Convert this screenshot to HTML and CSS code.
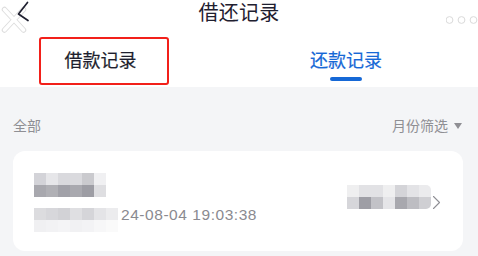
FILE: index.html
```html
<!DOCTYPE html>
<html lang="zh-CN">
<head>
<meta charset="utf-8">
<title>借还记录</title>
<link rel="stylesheet" href="styles.css">
</head>
<body>
<div class="page">
  <header class="nav">
    <div class="nav-left">
      <svg class="nav-icon" width="32" height="36" viewBox="0 0 32 36">
        <g stroke-linecap="round">
          <path d="M4.5 9.5 L23.5 30 M23.5 9.5 L4.5 30" stroke="#dedede" stroke-width="5.5" fill="none"/>
          <path d="M4.5 9.5 L23.5 30 M23.5 9.5 L4.5 30" stroke="#ffffff" stroke-width="3.5" fill="none"/>
        </g>
        <path d="M27.5 2.5 L18.5 14 L28 20.5" stroke="#1f2030" stroke-width="1.7" fill="none" stroke-linecap="round" stroke-linejoin="round"/>
      </svg>
    </div>
    <h1 class="title">借还记录</h1>
    <div class="nav-right">
      <svg class="dots" width="32" height="12" viewBox="0 0 32 12">
        <circle cx="3.5" cy="6" r="3.4" fill="#fff" stroke="#dadada" stroke-width="1"/>
        <circle cx="15.5" cy="6" r="3.4" fill="#fff" stroke="#dadada" stroke-width="1"/>
        <circle cx="27.5" cy="6" r="3.4" fill="#fff" stroke="#dadada" stroke-width="1"/>
      </svg>
    </div>
  </header>

  <nav class="tabs">
    <div class="tab tab-marked">借款记录</div>
    <div class="tab tab-current">
      <span class="tab-label">还款记录</span>
      <i class="tab-bar"></i>
    </div>
  </nav>

  <main class="content">
    <div class="filter">
      <span class="filter-all">全部</span>
      <span class="filter-month">月份筛选<i class="caret"></i></span>
    </div>

    <div class="card">
      <div class="card-left">
        <div class="mosaic mosaic-name"></div>
        <div class="time-row">
          <div class="mosaic mosaic-label"></div>
          <span class="time">24-08-04 19:03:38</span>
        </div>
      </div>
      <div class="card-right">
        <div class="mosaic mosaic-amount"></div>
        <svg class="chevron" width="9" height="15" viewBox="0 0 9 15">
          <path d="M1.5 1.5 L7.5 7.5 L1.5 13.5" stroke="#8f8f95" stroke-width="1.1" fill="none" stroke-linecap="round" stroke-linejoin="round"/>
        </svg>
      </div>
    </div>
  </main>
</div>
</body>
</html>
```

FILE: styles.css
```css
* {
  box-sizing: border-box;
  margin: 0;
  padding: 0;
}

html, body {
  width: 478px;
  height: 256px;
  overflow: hidden;
  background: #ffffff;
}

body {
  font-family: "Noto Sans CJK SC", "Noto Sans", sans-serif;
}

.page {
  width: 478px;
  height: 256px;
  display: flex;
  flex-direction: column;
  background: #f4f5f7;
}

/* ---------- nav bar ---------- */
.nav {
  height: 37px;
  display: grid;
  grid-template-columns: 1fr auto 1fr;
  align-items: start;
  background: #ffffff;
}

.nav-left {
  justify-self: start;
}

.nav-icon {
  display: block;
}

.title {
  margin-top: 1px;
  font-size: 20px;
  line-height: 22px;
  font-weight: 400;
  color: #1f2030;
  letter-spacing: 0.3px;
}

.nav-right {
  justify-self: end;
  padding-top: 14px;
}

.dots {
  display: block;
}

/* ---------- tabs ---------- */
.tabs {
  height: 50px;
  display: flex;
  align-items: flex-start;
  background: #ffffff;
}

.tab {
  font-size: 18px;
  line-height: 22px;
  font-weight: 400;
  -webkit-text-stroke: 0.2px currentColor;
}

.tab-marked {
  margin-left: 39px;
  width: 130px;
  height: 48px;
  border: 2.5px solid #f2201a;
  border-radius: 3px;
  padding: 8.5px 0 0 23.5px;
  color: #1e1f2e;
}

.tab-current {
  margin-left: 141px;
  padding-top: 11px;
  display: flex;
  flex-direction: column;
  align-items: center;
  color: #1668d6;
}

.tab-label {
  display: block;
}

.tab-bar {
  display: block;
  width: 32px;
  height: 3.5px;
  margin-top: 7px;
  border-radius: 2px;
  background: #1668d6;
}

/* ---------- content ---------- */
.content {
  flex: 1;
  background: #f4f5f7;
}

.filter {
  display: flex;
  justify-content: space-between;
  align-items: center;
  padding: 28px 16px 0 13px;
  font-size: 14px;
  line-height: 20px;
  color: #8f8f94;
}

.filter-month {
  display: flex;
  align-items: center;
}

.caret {
  display: block;
  width: 0;
  height: 0;
  margin-left: 6px;
  margin-top: 1px;
  border-left: 4.5px solid transparent;
  border-right: 4.5px solid transparent;
  border-top: 6px solid #8f8f94;
}

.card {
  margin: 16px 15px 0 13px;
  height: 100px;
  border-radius: 12px;
  background: #ffffff;
  display: flex;
  padding: 22px 0 0 21px;
}

.card-left {
  display: flex;
  flex-direction: column;
}

.mosaic {
  height: 24px;
  background-repeat: no-repeat;
  background-size: 100% 12px;
}

.mosaic-name {
  width: 72px;
  background-image:
    linear-gradient(to right, #d3d3d8 0 12px, #e6e6e9 12px 24px, #d9d9dd 24px 36px, #dadade 36px 48px, #cacace 48px 60px, #f0f0f2 60px 72px),
    linear-gradient(to right, #a8a8ae 0 12px, #b0b0b5 12px 24px, #a1a1a8 24px 36px, #a9a9af 36px 48px, #9d9da4 48px 60px, #dedee1 60px 72px);
  background-position: 0 0, 0 12px;
}

.time-row {
  display: flex;
  align-items: flex-start;
  margin-top: 11px;
}

.mosaic-label {
  width: 84px;
  background-image:
    linear-gradient(to right, #dcdcdf 0 12px, #d7d7db 12px 24px, #d2d2d6 24px 36px, #dfdfe2 36px 48px, #d5d5d9 48px 60px, #e4e4e7 60px 72px, #ececee 72px 84px),
    linear-gradient(to right, #f0f0f2 0 12px, #f2f2f4 12px 24px, #f4f4f6 24px 36px, #f1f1f3 36px 48px, #f3f3f5 48px 60px, #f7f7f8 60px 72px, #fafafa 72px 84px);
  background-position: 0 0, 0 12px;
}

.time {
  margin-left: 3px;
  margin-top: -1px;
  font-family: "Liberation Sans", "Noto Sans", sans-serif;
  font-size: 15.5px;
  line-height: 16px;
  letter-spacing: 0.55px;
  color: #8a8a90;
}

.card-right {
  margin-left: auto;
  margin-right: 22px;
  padding-top: 12px;
  display: flex;
  align-items: flex-start;
}

.mosaic-amount {
  width: 84px;
  border-radius: 0 5px 5px 0;
  background-image:
    linear-gradient(to right, #efeff0 0 12px, #e2e2e5 12px 24px, #e2e2e5 24px 36px, #efeff0 36px 48px, #d4d4d8 48px 60px, #e3e3e6 60px 72px, #ebebed 72px 84px),
    linear-gradient(to right, #d6d6da 0 12px, #9e9ea5 12px 24px, #c2c2c7 24px 36px, #e5e5e8 36px 48px, #a8a8ae 48px 60px, #bdbdc2 60px 72px, #cfcfd3 72px 84px);
  background-position: 0 0, 0 12px;
}

.chevron {
  display: block;
  margin-left: 1.5px;
  margin-top: 9.5px;
}
```
